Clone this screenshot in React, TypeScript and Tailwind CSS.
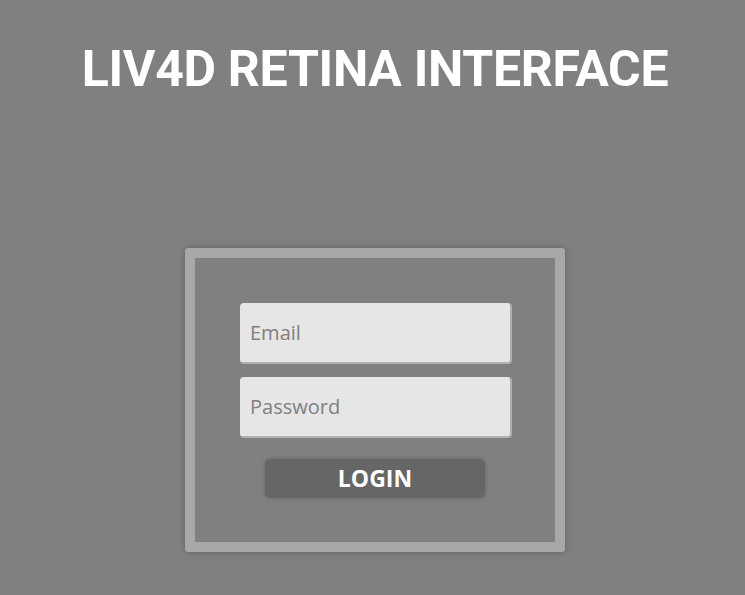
export default function App() {
  return (
    <div className="min-h-[595px] w-full bg-[#808080] pl-[5px] font-['Open_Sans',sans-serif]">
      <h1 className="pt-[39px] text-center font-['Roboto',sans-serif] text-[50px] font-bold leading-[60px] tracking-[-0.3px] text-white">
        LIV4D RETINA INTERFACE
      </h1>

      <div className="mt-[149px] flex justify-center">
        <div className="h-[304px] w-[380px] rounded-[3px] border-[10px] border-[#a8a8a8] bg-[#808080] shadow-[0_0_6px_rgba(0,0,0,0.25)]">
          <form className="flex flex-col items-center pt-[45px]">
            <input
              type="email"
              placeholder="Email"
              className="ml-[2px] h-[61px] w-[272px] rounded-[4px] border-r-2 border-b-2 border-[#b0b0b0] bg-[#e6e6e6] px-[10px] text-[20px] text-[#555] outline-none placeholder:text-[#7f7f7f]"
            />
            <input
              type="password"
              placeholder="Password"
              className="mt-[13px] ml-[2px] h-[61px] w-[272px] rounded-[4px] border-r-2 border-b-2 border-[#b0b0b0] bg-[#e6e6e6] px-[10px] text-[20px] text-[#555] outline-none placeholder:text-[#7f7f7f]"
            />
            <button
              type="button"
              className="mt-[21px] h-[39px] w-[220px] rounded-[5px] bg-[#666666] text-[23px] font-bold text-white shadow-[0_0_5px_rgba(0,0,0,0.2)]"
            >
              LOGIN
            </button>
          </form>
        </div>
      </div>
    </div>
  )
}
